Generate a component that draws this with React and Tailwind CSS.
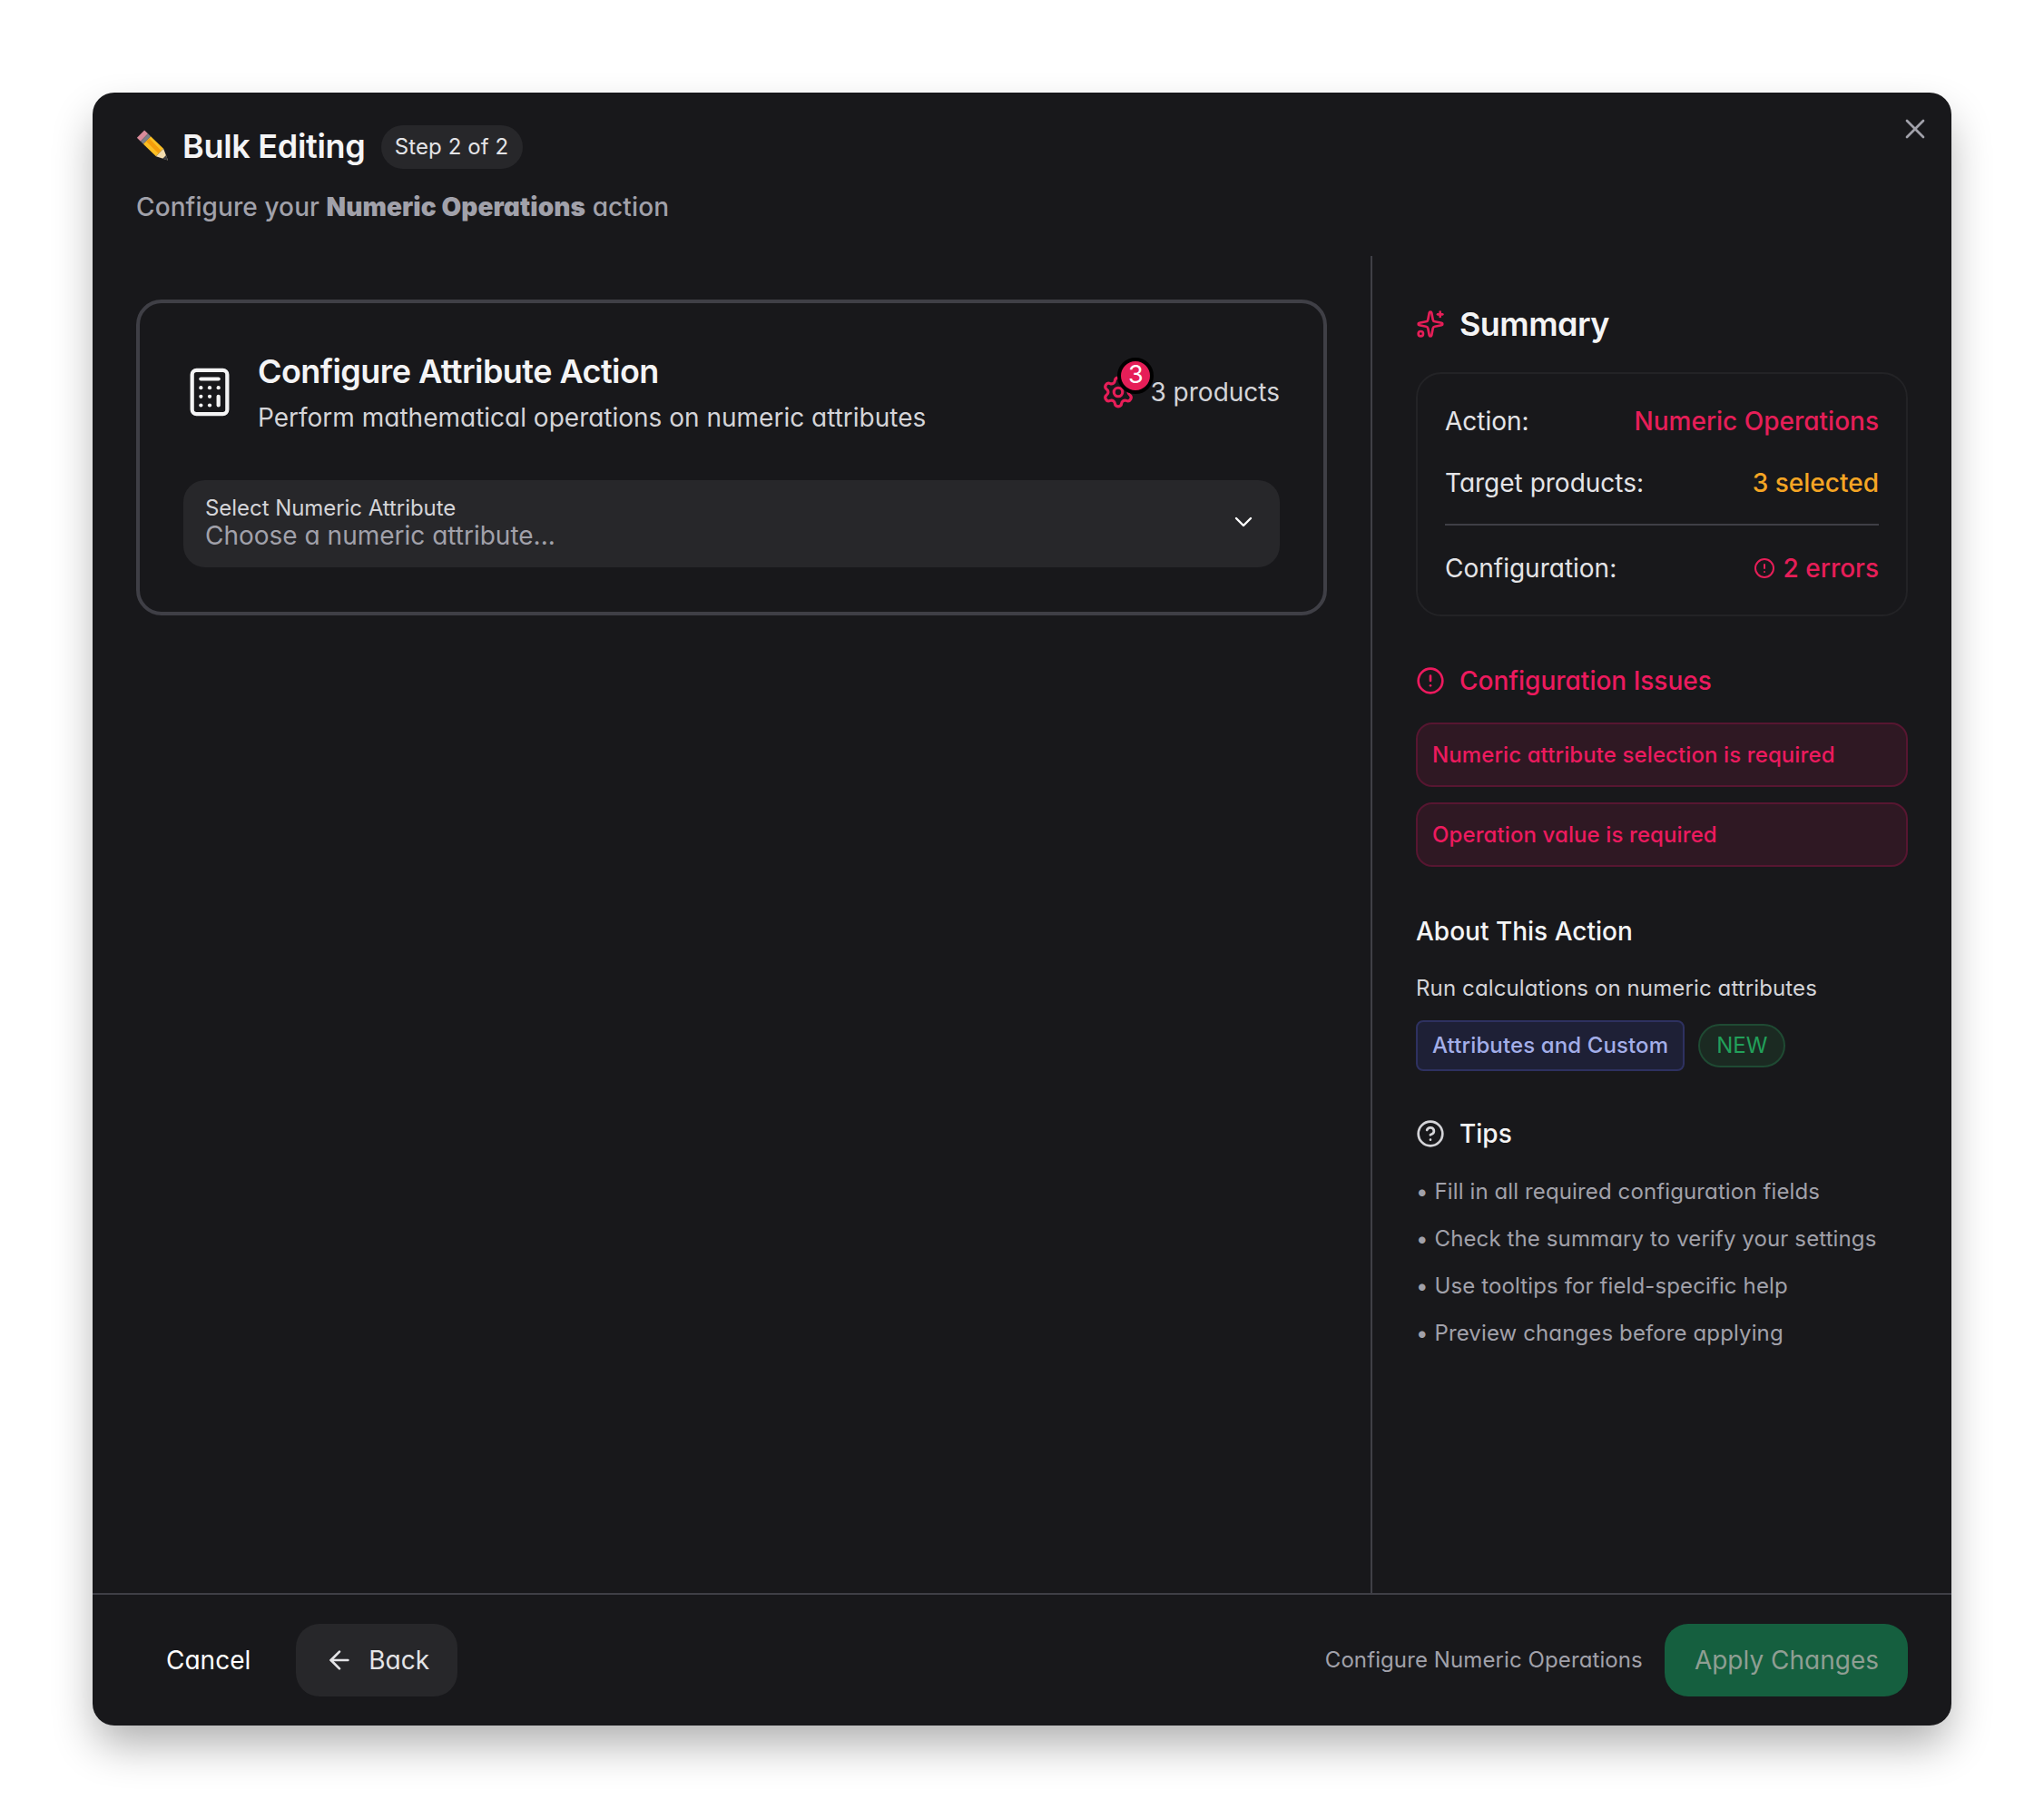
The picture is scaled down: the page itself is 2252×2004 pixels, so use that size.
import React from "react";
import { Calculator, Settings, Sparkles, CircleAlert, CircleHelp, ChevronDown, ArrowLeft, X } from "lucide-react";

function Pencil() {
  return (
    <svg width="36" height="35" viewBox="0 0 36 34" className="shrink-0 -mt-[3px]">
      <polygon points="9.1,0 13.1,3.7 4.9,12.3 0.9,8.3" fill="#d98a9a" />
      <polygon points="13.1,3.7 16.1,6.7 7.9,15.3 4.9,12.3" fill="#7d7f88" />
      <polygon points="16.1,6.7 30.1,20.2 21.9,28.8 7.9,15.3" fill="#fbbf24" />
      <polygon points="14.6,9 27.5,22.4 24.6,25.5 11.3,12.4" fill="#f59e0b" />
      <polygon points="30.1,20.2 35,33 21.9,28.8" fill="#f3dcae" />
      <polygon points="33,27.5 35,33 29,31.5" fill="#3a3a3f" />
    </svg>
  );
}

function Row({ label, children, className }) {
  return (
    <div className={"flex items-center justify-between h-10 text-[28px] " + (className || "")}>
      <span className="text-[#e4e4e7]">{label}</span>
      {children}
    </div>
  );
}

function Issue({ children, className }) {
  return (
    <div className={"flex items-center h-[71px] rounded-[18px] border-2 border-[#571631] bg-[#2f1823] px-4 text-[24px] tracking-[0.1px] font-medium text-[#ec1a5e] " + (className || "")}>
      {children}
    </div>
  );
}

const tips = [
  "Fill in all required configuration fields",
  "Check the summary to verify your settings",
  "Use tooltips for field-specific help",
  "Preview changes before applying",
];

export default function App() {
  return (
    <div className="min-h-[2004px] bg-white p-[102px] font-[Inter,sans-serif] [font-feature-settings:'cv11']">
      <div className="relative flex flex-col w-[2048px] h-[1799px] rounded-[24px] bg-[#18181b] shadow-[0_24px_48px_-4px_rgba(0,0,0,0.32)] text-white">
        <button className="absolute right-[22px] top-[22px] text-[#a1a1aa]">
          <X size={36} strokeWidth={1.8} />
        </button>

        <header className="flex flex-col h-[180px] px-12 pt-9">
          <div className="flex items-center h-12">
            <Pencil />
            <h1 className="ml-[15px] pb-[2px] text-[36px] font-semibold tracking-[-0.3px] text-[#f4f4f5]">Bulk Editing</h1>
            <span className="ml-[17px] flex items-center h-12 w-[156px] justify-center rounded-full bg-[#27272a] text-[24px] tracking-[0.1px] text-[#e4e4e7]">
              Step 2 of 2
            </span>
          </div>
          <p className="mt-[22px] text-[28px] leading-10 font-medium tracking-[0.1px] text-[#a1a1aa]">
            Configure your <strong className="font-black">Numeric Operations</strong> action
          </p>
        </header>

        <div className="flex flex-1 min-h-0">
          <div className="flex-1 p-12">
            <section className="rounded-[28px] border-4 border-[#3f3f46] px-12 pt-12 pb-[49px]">
              <div className="flex items-center">
                <Calculator size={58} strokeWidth={1.75} className="shrink-0 text-[#f4f4f5]" />
                <div className="ml-6 flex-1">
                  <h2 className="text-[36px] leading-[54px] font-semibold tracking-[-0.55px] text-[#f4f4f5]">Configure Attribute Action</h2>
                  <p className="mt-[3px] text-[28px] leading-[42px] text-[#d4d4d8]">
                    Perform mathematical operations on numeric attributes
                  </p>
                </div>
                <div className="flex items-center gap-[16px]">
                  <div className="relative w-[38px] h-[38px]">
                    <Settings size={38} strokeWidth={2} className="text-[#e61e58]" />
                    <span className="absolute -right-[20px] -top-[19px] flex items-center justify-center w-10 h-10 rounded-full border-4 border-black bg-[#e61e58] text-[27px] text-white">
                      3
                    </span>
                  </div>
                  <span className="text-[28px] text-[#d4d4d8]">3 products</span>
                </div>
              </div>
              <button className="mt-12 flex items-center justify-between w-full h-24 rounded-[24px] bg-[#27272a] pl-6 pr-6 text-left">
                <span className="flex flex-col pb-[5px]">
                  <span className="text-[24px] leading-[30px] tracking-[-0.05px] text-[#d4d4d8]">Select Numeric Attribute</span>
                  <span className="text-[28px] leading-[30px] text-[#a1a1aa]">Choose a numeric attribute...</span>
                </span>
                <ChevronDown size={32} strokeWidth={1.8} className="-mt-1 text-white" />
              </button>
            </section>
          </div>

          <aside className="w-[640px] shrink-0 border-l-2 border-[#3f3f46] px-12 pt-12">
            <div className="flex items-center h-[54px] gap-4">
              <Sparkles size={32} strokeWidth={2} className="text-[#e61e58]" />
              <h2 className="text-[36px] font-semibold tracking-[-0.55px] text-[#f4f4f5]">Summary</h2>
            </div>
            <div className="mt-[26px] rounded-[28px] border-2 border-[#232326] px-[30px] pt-8 pb-[31px]">
              <Row label="Action:">
                <span className="font-medium text-[#e61e58]">Numeric Operations</span>
              </Row>
              <Row label="Target products:" className="mt-7">
                <span className="font-medium text-[#f5a524]">3 selected</span>
              </Row>
              <div className="mt-[25px] h-0.5 bg-[#3f3f46]" />
              <Row label="Configuration:" className="mt-[27px]">
                <span className="flex items-center gap-[9px] font-medium text-[#e61e58]">
                  <CircleAlert size={24} strokeWidth={2} />2 errors
                </span>
              </Row>
            </div>

            <div className="mt-[51px] flex items-center h-10 gap-4 text-[#ec1a5e]">
              <CircleAlert size={32} strokeWidth={2} />
              <h3 className="text-[28px] font-medium">Configuration Issues</h3>
            </div>
            <Issue className="mt-[26px]">Numeric attribute selection is required</Issue>
            <Issue className="mt-[17px]">Operation value is required</Issue>

            <h3 className="mt-[51px] h-10 text-[28px] leading-10 font-medium text-[#f4f4f5]">About This Action</h3>
            <p className="mt-[25px] text-[24px] leading-9 tracking-[0.12px] text-[#d4d4d8]">Run calculations on numeric attributes</p>
            <div className="mt-[17px] flex items-center gap-[15px]">
              <span className="flex items-center h-14 rounded-[8px] border-2 border-[#2e3160] bg-[#1e2036] px-4 text-[24px] tracking-[0.12px] font-medium text-[#a3aee8]">
                Attributes and Custom
              </span>
              <span className="flex items-center h-12 rounded-full border-2 border-[#1f4a33] bg-[#1b2a22] px-[18px] text-[24px] text-[#22a05a]">
                NEW
              </span>
            </div>

            <div className="mt-[49px] flex items-center h-10 gap-4">
              <CircleHelp size={32} strokeWidth={2} className="text-[#d4d4d8]" />
              <h3 className="text-[28px] font-medium text-[#f4f4f5]">Tips</h3>
            </div>
            <ul className="mt-[26px] flex flex-col gap-4 text-[24px] leading-9 tracking-[0.12px] text-[#a1a1aa]">
              {tips.map((t) => (
                <li key={t}>• {t}</li>
              ))}
            </ul>
          </aside>
        </div>

        <footer className="flex items-center justify-between h-[146px] border-t-2 border-[#3f3f46] px-12">
          <div className="flex items-center gap-[17px]">
            <button className="h-20 px-[33px] text-[28px] text-white">Cancel</button>
            <button className="flex items-center h-20 gap-[16px] rounded-[26px] bg-[#27272a] pl-8 pr-[31px] text-[28px] text-[#e4e4e7]">
              <ArrowLeft size={32} strokeWidth={2} />
              Back
            </button>
          </div>
          <div className="flex items-center gap-6">
            <span className="text-[24px] tracking-[0.1px] text-[#a1a1aa]">Configure Numeric Operations</span>
            <button className="h-20 rounded-[26px] bg-[#155f3f] pl-[33px] pr-8 text-[28px] text-[#8f9e93]">Apply Changes</button>
          </div>
        </footer>
      </div>
    </div>
  );
}
